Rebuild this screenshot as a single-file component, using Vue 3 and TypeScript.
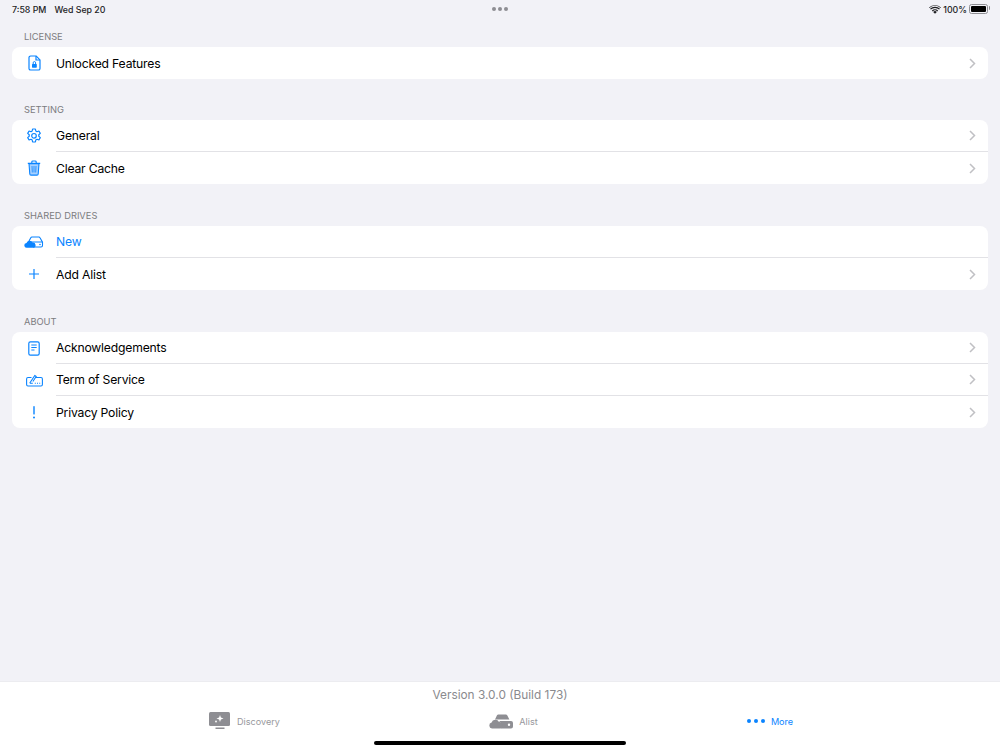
<template>
  <div class="ipad">
    <div class="status-bar">
      <div class="status-left">
        <span>7:58 PM</span>
        <span>Wed Sep 20</span>
      </div>
      <div class="multitask"><i></i><i></i><i></i></div>
      <div class="status-right">
        <svg width="12" height="9" viewBox="0 0 12 9">
          <path d="M6 8.800 4.200 6.900a2.600 2.600 0 0 1 3.600 0L6 8.800Z" fill="#1c1c1e" />
          <path d="M2.900 5.600a4.400 4.400 0 0 1 6.200 0l-.8.8a3.300 3.300 0 0 0-4.600 0l-.8-.8Z" fill="#1c1c1e" />
          <path d="M1 3.700a7.100 7.100 0 0 1 10 0l-.9.9a5.800 5.800 0 0 0-8.200 0L1 3.700Z" fill="#1c1c1e" />
          <path d="M0 2.600a8.600 8.600 0 0 1 12 0l-.5.5a7.900 7.900 0 0 0-11 0L0 2.600Z" fill="#1c1c1e" />
        </svg>
        <span>100%</span>
        <div class="battery"><div class="battery-fill"></div></div>
      </div>
    </div>

    <main class="content">
      <section v-for="group in groups" :key="group.title" class="group">
        <div class="group-title">{{ group.title }}</div>
        <div class="card">
          <div v-for="row in group.rows" :key="row.label" class="row">
            <div class="row-icon">
              <svg v-if="row.icon === 'file'" width="13" height="16" viewBox="0 0 13 16" fill="none" stroke="#0a84ff" stroke-width="1.200">
                <path d="M2.600 1h5.600L12 4.900v8.500a1.600 1.600 0 0 1-1.600 1.600H2.600A1.600 1.600 0 0 1 1 13.400V2.600A1.600 1.600 0 0 1 2.600 1Z" />
                <path d="M8 1v4h4" />
                <rect x="4" y="9" width="4.800" height="3.700" rx=".6" fill="#0a84ff" stroke="none" />
                <path d="M5.200 9V7.800a1.200 1.200 0 0 1 2.400 0V9" stroke-width="1" />
              </svg>
              <svg v-else-if="row.icon === 'gear'" width="16" height="16" viewBox="0 0 16 16" fill="none" stroke="#0a84ff" stroke-width="1.200" stroke-linejoin="round">
                <path d="M6.600 1h2.800l.4 2 1.200.7 1.900-.7 1.400 2.400-1.500 1.400v1.400l1.500 1.400-1.400 2.400-1.900-.7-1.200.7-.4 2H6.600l-.4-2-1.200-.7-1.900.7-1.400-2.400 1.500-1.400V6.800L1.700 5.400l1.400-2.400 1.900.7 1.200-.7.400-2Z" />
                <circle cx="8" cy="7.800" r="2.300" />
              </svg>
              <svg v-else-if="row.icon === 'trash'" width="14" height="16" viewBox="0 0 14 16" fill="none" stroke="#0a84ff" stroke-width="1.100">
                <path d="M2 3.600h10l-.8 10.400a1.200 1.200 0 0 1-1.200 1.100H4a1.200 1.200 0 0 1-1.200-1.100L2 3.600Z" fill="#a8d1ff" />
                <path d="M.8 3.400h12.400M4.800 3.200V1.900A1 1 0 0 1 5.800 1h2.400a1 1 0 0 1 1 .9v1.300" />
                <path d="M5 6l.3 6.500M7 6v6.500M9 6l-.3 6.500" stroke-width=".8" />
              </svg>
              <svg v-else-if="row.icon === 'drive'" width="20" height="12" viewBox="0 0 20 12" fill="none">
                <path d="M4.500 6 6.800 1.700A1.300 1.300 0 0 1 8 1h6.800a1.300 1.300 0 0 1 1.200.7l2.500 4.500v3.300a1.500 1.500 0 0 1-1.500 1.500H9" stroke="#0a84ff" stroke-width="1.100" />
                <path d="M6 6h12.500" stroke="#0a84ff" stroke-width="1.100" />
                <circle cx="16" cy="8.500" r=".8" fill="#0a84ff" />
                <path d="M2.900 11.800a2.400 2.400 0 0 1-.4-4.800 3.200 3.200 0 0 1 6-.5 2.700 2.700 0 0 1 1 5.300H2.900Z" fill="#0a84ff" />
              </svg>
              <svg v-else-if="row.icon === 'plus'" width="12" height="12" viewBox="0 0 12 12" stroke="#0a84ff" stroke-width="1.200">
                <path d="M6 1v10M1 6h10" />
              </svg>
              <svg v-else-if="row.icon === 'doc'" width="12" height="15" viewBox="0 0 12 15" fill="none" stroke="#0a84ff" stroke-width="1.200">
                <rect x=".8" y=".8" width="10.400" height="13.400" rx="1.600" />
                <path d="M3.300 4h5.400M3.300 6.500h5.400M3.300 9h3.200" stroke-width="1" />
              </svg>
              <svg v-else-if="row.icon === 'keyboard'" width="17" height="13" viewBox="0 0 17 13" fill="none" stroke="#0a84ff" stroke-width="1.100">
                <path d="M5.500 3.500H2a1.400 1.400 0 0 0-1.400 1.400v5.700A1.400 1.400 0 0 0 2 12h13a1.400 1.400 0 0 0 1.400-1.400V4.900A1.400 1.400 0 0 0 15 3.500h-5.500" />
                <path d="m3.800 9 5-7.500 1.400 1-3.300 5" />
                <path d="M3.800 9.300h3M8.800 9.300h1M11 9.300h1M13.200 9.300h1" />
              </svg>
              <svg v-else width="4" height="13" viewBox="0 0 4 13" fill="#0a84ff">
                <rect x="1.300" y="0" width="1.400" height="8.600" rx=".7" />
                <circle cx="2" cy="11.500" r="1" />
              </svg>
            </div>
            <div class="row-body">
              <span class="row-label" :class="{ accent: row.accent }">{{ row.label }}</span>
              <svg v-if="!row.accent" width="7" height="11" viewBox="0 0 7 11" fill="none" stroke="#c0c0c4" stroke-width="1.500">
                <path d="m1 1 4.500 4.500L1 10" />
              </svg>
            </div>
          </div>
        </div>
      </section>
    </main>

    <footer class="footer">
      <div class="version">Version 3.0.0 (Build 173)</div>
      <div class="tabs">
        <div class="tab">
          <svg width="22" height="18" viewBox="0 0 22 18" fill="#8e8e93">
            <rect x="0" y="0" width="21" height="14" rx="1.500" />
            <rect x="6.500" y="15.500" width="9" height="1.500" />
            <path d="M11 3l.9 2.600 2.600.9-2.600.9L11 10l-.9-2.600-2.600-.9 2.600-.9L11 3Z" fill="#fff" />
            <circle cx="7" cy="9.500" r=".9" fill="#fff" />
          </svg>
          <span>Discovery</span>
        </div>
        <div class="tab">
          <svg width="24" height="15" viewBox="0 0 24 15" fill="#8e8e93">
            <path d="M6 5.500 8 1.300A1.500 1.500 0 0 1 9.400.500h7.400a1.500 1.500 0 0 1 1.400.8l2.200 4.200H6Z" />
            <path d="M10 7h12a2 2 0 0 1 2 2v3.500a2 2 0 0 1-2 2H11.500a5 5 0 0 0-1.500-7.500Z" />
            <circle cx="20" cy="10.700" r="1.200" fill="#fff" />
            <path d="M3 14.500a3 3 0 0 1-.4-5.900 4 4 0 0 1 7.400-.7 3.300 3.300 0 0 1 .6 6.600H3Z" />
          </svg>
          <span>Alist</span>
        </div>
        <div class="tab active">
          <div class="more-dots"><i></i><i></i><i></i></div>
          <span>More</span>
        </div>
      </div>
      <div class="home-indicator"></div>
    </footer>
  </div>
</template>

<script setup lang="ts">
interface Row {
  icon: string
  label: string
  accent?: boolean
}

const groups: { title: string; rows: Row[] }[] = [
  { title: 'LICENSE', rows: [{ icon: 'file', label: 'Unlocked Features' }] },
  {
    title: 'SETTING',
    rows: [
      { icon: 'gear', label: 'General' },
      { icon: 'trash', label: 'Clear Cache' }
    ]
  },
  {
    title: 'SHARED DRIVES',
    rows: [
      { icon: 'drive', label: 'New', accent: true },
      { icon: 'plus', label: 'Add Alist' }
    ]
  },
  {
    title: 'ABOUT',
    rows: [
      { icon: 'doc', label: 'Acknowledgements' },
      { icon: 'keyboard', label: 'Term of Service' },
      { icon: 'alert', label: 'Privacy Policy' }
    ]
  }
]
</script>

<style>
html, body {
  margin: 0;
  background: #f2f2f7;
}
</style>

<style scoped>
.ipad {
  width: 1000px;
  height: 750px;
  display: flex;
  flex-direction: column;
  background: #f2f2f7;
  font-family: Inter, "Liberation Sans", sans-serif;
  color: #000;
  overflow: hidden;
}
.status-bar {
  height: 18px;
  display: grid;
  grid-template-columns: 1fr auto 1fr;
  align-items: center;
  padding: 0 12px;
  font-size: 8.800px;
  font-weight: 500;
  color: #1c1c1e;
}
.status-left {
  display: flex;
  gap: 8px;
}
.multitask {
  display: flex;
  gap: 2px;
}
.multitask i {
  width: 4px;
  height: 4px;
  border-radius: 50%;
  background: #8e8e93;
}
.status-right {
  display: flex;
  justify-content: flex-end;
  align-items: center;
  gap: 2px;
}
.battery {
  width: 15px;
  height: 6px;
  padding: 1px;
  border: 1px solid #8e8e93;
  border-radius: 2.500px;
  position: relative;
}
.battery::after {
  content: "";
  position: absolute;
  right: -3px;
  top: 1px;
  width: 1.500px;
  height: 4px;
  background: #8e8e93;
  border-radius: 0 1px 1px 0;
}
.battery-fill {
  height: 100%;
  background: #000;
  border-radius: 1px;
}
.content {
  flex: 1;
  padding: 0 12px;
}
.group {
  margin-bottom: 13px;
}
.group:first-child {
  margin-bottom: 12px;
}
.group-title {
  height: 29px;
  padding: 11.500px 0 0 12px;
  box-sizing: border-box;
  font-size: 9.300px;
  line-height: 14px;
  color: #7c7c80;
}
.card {
  background: #fff;
  border-radius: 8px;
  overflow: hidden;
}
.row {
  height: 32px;
  display: flex;
}
.row-icon {
  width: 44px;
  display: flex;
  align-items: center;
  justify-content: center;
  flex-shrink: 0;
}
.row-body {
  flex: 1;
  display: flex;
  align-items: center;
  justify-content: space-between;
  padding-right: 12px;
  border-bottom: 1px solid #e2e2e6;
}
.row:last-child .row-body {
  border-bottom: none;
}
.row-label {
  font-size: 12.200px;
  letter-spacing: -0.200px;
}
.row-label.accent {
  color: #0a84ff;
}
.footer {
  height: 69px;
  background: #fff;
  border-top: 1px solid #ececf0;
  box-sizing: border-box;
  display: flex;
  flex-direction: column;
  align-items: center;
  position: relative;
}
.version {
  margin-top: 5px;
  font-size: 11.850px;
  line-height: 16px;
  color: #8a8a8e;
}
.tabs {
  width: 100%;
  box-sizing: border-box;
  margin-top: 7px;
  padding-left: 110px;
  display: flex;
}
.tab {
  width: 269px;
  height: 22px;
  display: flex;
  align-items: center;
  justify-content: center;
  gap: 6px;
  font-size: 9.100px;
  color: #98989c;
}
.tab.active {
  width: 244px;
  color: #0a84ff;
}
.more-dots {
  display: flex;
  gap: 3px;
}
.more-dots i {
  width: 4px;
  height: 4px;
  border-radius: 50%;
  background: #0a84ff;
}
.home-indicator {
  position: absolute;
  left: 374px;
  bottom: 5px;
  width: 252px;
  height: 4px;
  border-radius: 2px;
  background: #000;
}
</style>
